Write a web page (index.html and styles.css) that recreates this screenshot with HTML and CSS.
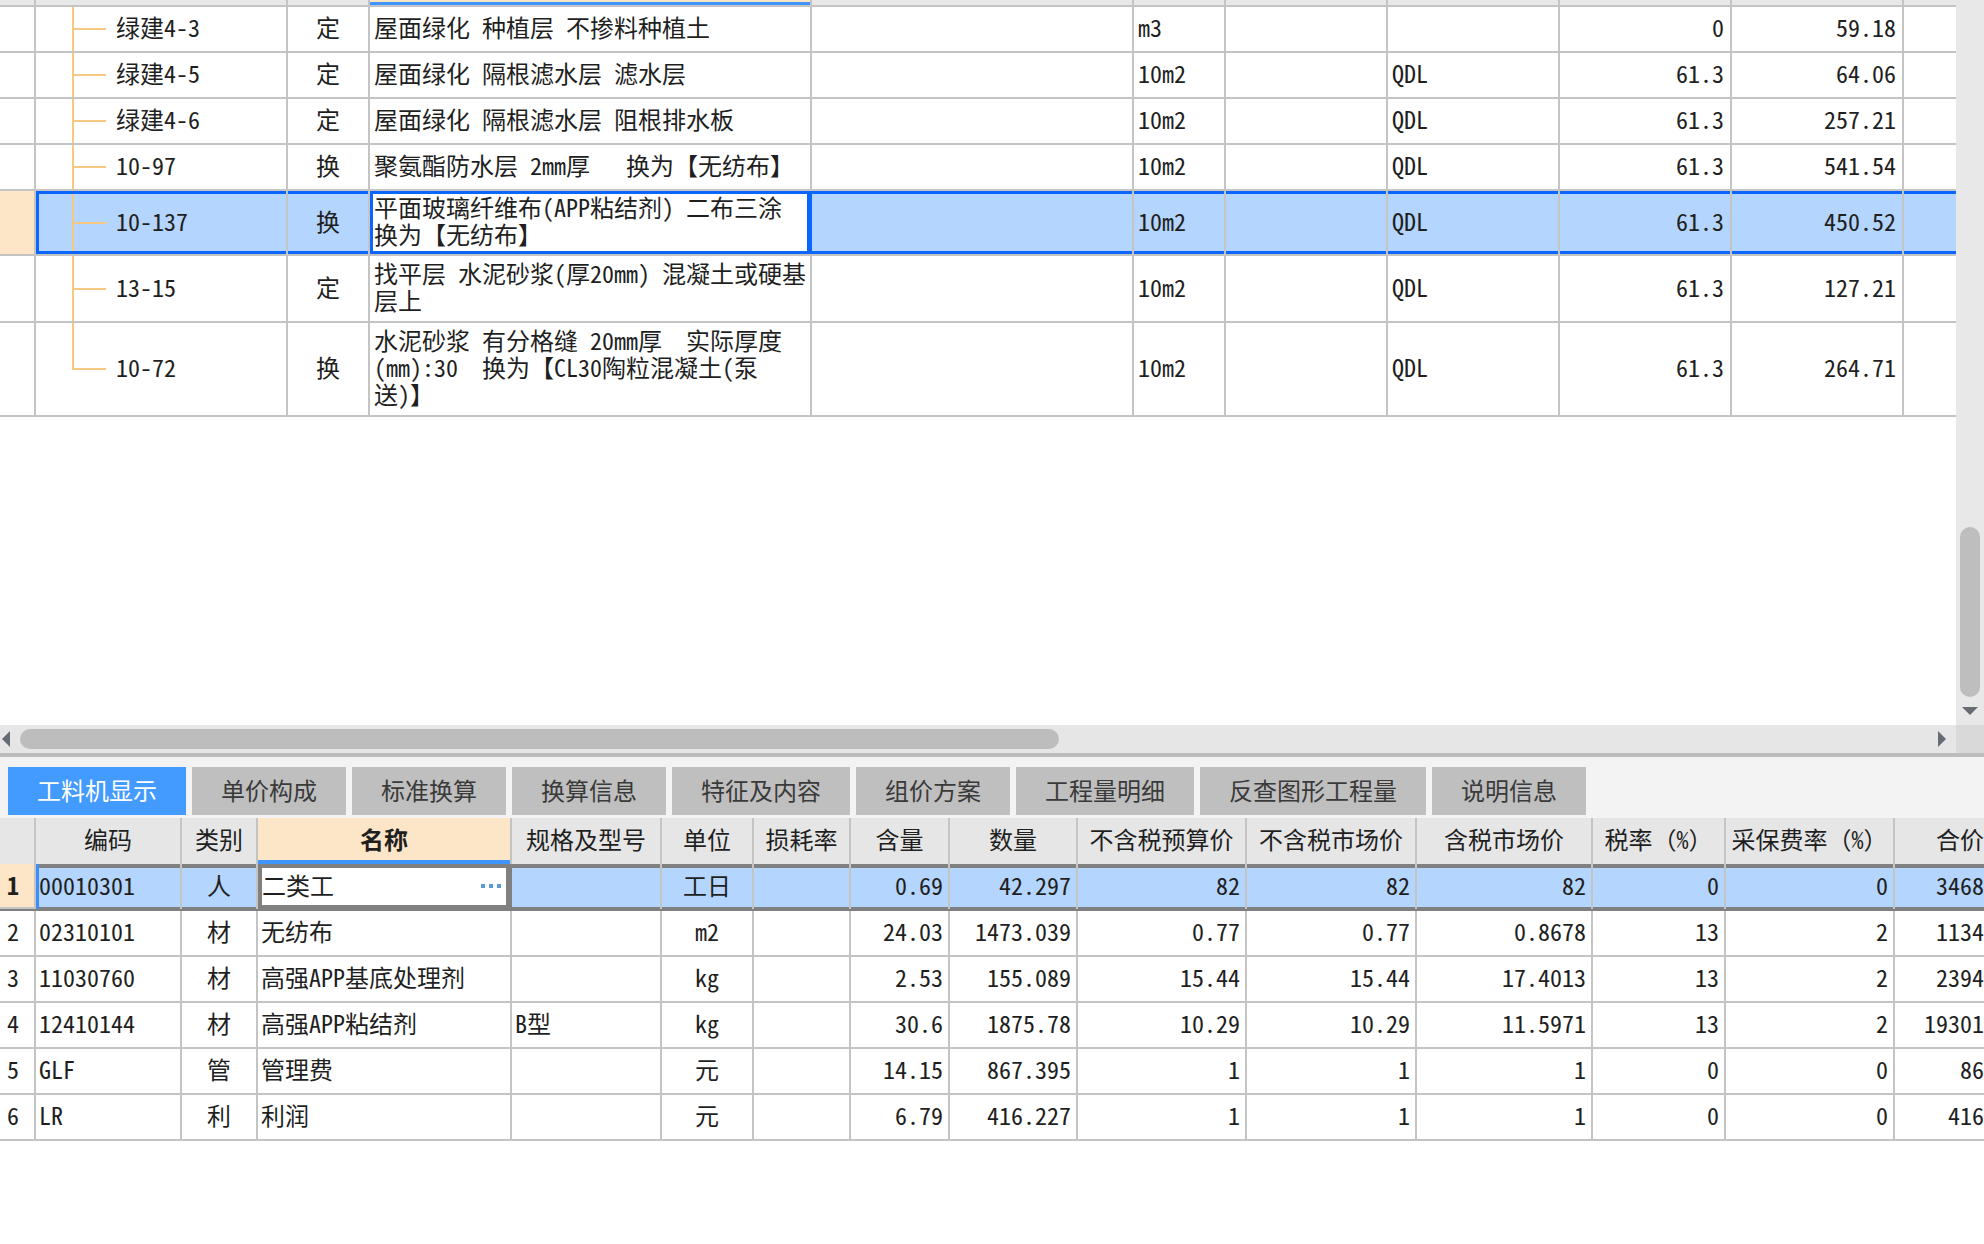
FILE: index.html
```html
<!DOCTYPE html>
<html lang="zh-CN">
<head>
<meta charset="utf-8">
<title>工料机显示</title>
<link rel="stylesheet" href="styles.css">
</head>
<body>
<div class="upper">
  <div class="sheet">
    <div class="grid-top">
      <div class="row head">
        <div class="cell"></div><div class="cell"></div><div class="cell"></div><div class="cell hsel"></div><div class="cell"></div><div class="cell"></div><div class="cell"></div><div class="cell"></div><div class="cell"></div><div class="cell"></div><div class="cell"></div>
      </div>
      <div class="row r1">
        <div class="cell rh"></div>
        <div class="cell code tree"><span class="txt">绿建4-3</span></div>
        <div class="cell ctr">定</div>
        <div class="cell"><span class="txt">屋面绿化 种植层 不掺料种植土</span></div>
        <div class="cell"></div>
        <div class="cell"><span class="txt">m3</span></div>
        <div class="cell"></div>
        <div class="cell"></div>
        <div class="cell num">0</div>
        <div class="cell num">59.18</div>
        <div class="cell"></div>
      </div>
      <div class="row r1">
        <div class="cell rh"></div>
        <div class="cell code tree"><span class="txt">绿建4-5</span></div>
        <div class="cell ctr">定</div>
        <div class="cell"><span class="txt">屋面绿化 隔根滤水层 滤水层</span></div>
        <div class="cell"></div>
        <div class="cell"><span class="txt">10m2</span></div>
        <div class="cell"></div>
        <div class="cell"><span class="txt">QDL</span></div>
        <div class="cell num">61.3</div>
        <div class="cell num">64.06</div>
        <div class="cell"></div>
      </div>
      <div class="row r1">
        <div class="cell rh"></div>
        <div class="cell code tree"><span class="txt">绿建4-6</span></div>
        <div class="cell ctr">定</div>
        <div class="cell"><span class="txt">屋面绿化 隔根滤水层 阻根排水板</span></div>
        <div class="cell"></div>
        <div class="cell"><span class="txt">10m2</span></div>
        <div class="cell"></div>
        <div class="cell"><span class="txt">QDL</span></div>
        <div class="cell num">61.3</div>
        <div class="cell num">257.21</div>
        <div class="cell"></div>
      </div>
      <div class="row r1">
        <div class="cell rh"></div>
        <div class="cell code tree"><span class="txt">10-97</span></div>
        <div class="cell ctr">换</div>
        <div class="cell"><span class="txt">聚氨酯防水层 2mm厚   换为【无纺布】</span></div>
        <div class="cell"></div>
        <div class="cell"><span class="txt">10m2</span></div>
        <div class="cell"></div>
        <div class="cell"><span class="txt">QDL</span></div>
        <div class="cell num">61.3</div>
        <div class="cell num">541.54</div>
        <div class="cell"></div>
      </div>
      <div class="row r2a sel">
        <div class="cell rh"></div>
        <div class="cell code tree first"><span class="txt">10-137</span></div>
        <div class="cell ctr">换</div>
        <div class="cell edit"><span class="txt">平面玻璃纤维布(APP粘结剂) 二布三涂<br>换为【无纺布】</span></div>
        <div class="cell"></div>
        <div class="cell"><span class="txt">10m2</span></div>
        <div class="cell"></div>
        <div class="cell"><span class="txt">QDL</span></div>
        <div class="cell num">61.3</div>
        <div class="cell num">450.52</div>
        <div class="cell"></div>
      </div>
      <div class="row r2b">
        <div class="cell rh"></div>
        <div class="cell code tree"><span class="txt">13-15</span></div>
        <div class="cell ctr">定</div>
        <div class="cell"><span class="txt">找平层 水泥砂浆(厚20mm) 混凝土或硬基<br>层上</span></div>
        <div class="cell"></div>
        <div class="cell"><span class="txt">10m2</span></div>
        <div class="cell"></div>
        <div class="cell"><span class="txt">QDL</span></div>
        <div class="cell num">61.3</div>
        <div class="cell num">127.21</div>
        <div class="cell"></div>
      </div>
      <div class="row r3">
        <div class="cell rh"></div>
        <div class="cell code tree last"><span class="txt">10-72</span></div>
        <div class="cell ctr">换</div>
        <div class="cell"><span class="txt">水泥砂浆 有分格缝 20mm厚  实际厚度<br>(mm):30  换为【CL30陶粒混凝土(泵<br>送)】</span></div>
        <div class="cell"></div>
        <div class="cell"><span class="txt">10m2</span></div>
        <div class="cell"></div>
        <div class="cell"><span class="txt">QDL</span></div>
        <div class="cell num">61.3</div>
        <div class="cell num">264.71</div>
        <div class="cell"></div>
      </div>
    </div>
  </div>
  <div class="vscroll">
    <div class="vthumb"></div>
    <div class="arrow-down"></div>
  </div>
</div>

<div class="hbar">
  <div class="htrack">
    <div class="arrow-left"></div>
    <div class="hthumb"></div>
    <div class="hspace"></div>
    <div class="arrow-right"></div>
  </div>
  <div class="corner"></div>
</div>
<div class="split"></div>

<div class="tabbar">
  <div class="tab on">工料机显示</div>
  <div class="tab">单价构成</div>
  <div class="tab">标准换算</div>
  <div class="tab">换算信息</div>
  <div class="tab">特征及内容</div>
  <div class="tab">组价方案</div>
  <div class="tab">工程量明细</div>
  <div class="tab">反查图形工程量</div>
  <div class="tab">说明信息</div>
</div>

<div class="lower">
  <div class="grid-bot">
    <div class="row bhead">
      <div class="cell"></div>
      <div class="cell ctr">编码</div>
      <div class="cell ctr">类别</div>
      <div class="cell ctr hsel2">名称</div>
      <div class="cell ctr">规格及型号</div>
      <div class="cell ctr">单位</div>
      <div class="cell ctr">损耗率</div>
      <div class="cell ctr">含量</div>
      <div class="cell ctr">数量</div>
      <div class="cell ctr">不含税预算价</div>
      <div class="cell ctr">不含税市场价</div>
      <div class="cell ctr">含税市场价</div>
      <div class="cell ctr">税率（%）</div>
      <div class="cell ctr">采保费率（%）</div>
      <div class="cell ctr">合价</div>
    </div>
    <div class="row bsel">
      <div class="cell rn">1</div>
      <div class="cell first"><span class="txt">00010301</span></div>
      <div class="cell ctr">人</div>
      <div class="cell edit"><span class="txt">二类工</span><span class="dots"><i></i><i></i><i></i></span></div>
      <div class="cell"></div>
      <div class="cell ctr">工日</div>
      <div class="cell"></div>
      <div class="cell num">0.69</div>
      <div class="cell num">42.297</div>
      <div class="cell num">82</div>
      <div class="cell num">82</div>
      <div class="cell num">82</div>
      <div class="cell num">0</div>
      <div class="cell num">0</div>
      <div class="cell num">3468.35</div>
    </div>
    <div class="row b1">
      <div class="cell rn">2</div>
      <div class="cell"><span class="txt">02310101</span></div>
      <div class="cell ctr">材</div>
      <div class="cell"><span class="txt">无纺布</span></div>
      <div class="cell"></div>
      <div class="cell ctr">m2</div>
      <div class="cell"></div>
      <div class="cell num">24.03</div>
      <div class="cell num">1473.039</div>
      <div class="cell num">0.77</div>
      <div class="cell num">0.77</div>
      <div class="cell num">0.8678</div>
      <div class="cell num">13</div>
      <div class="cell num">2</div>
      <div class="cell num">1134.24</div>
    </div>
    <div class="row b1">
      <div class="cell rn">3</div>
      <div class="cell"><span class="txt">11030760</span></div>
      <div class="cell ctr">材</div>
      <div class="cell"><span class="txt">高强APP基底处理剂</span></div>
      <div class="cell"></div>
      <div class="cell ctr">kg</div>
      <div class="cell"></div>
      <div class="cell num">2.53</div>
      <div class="cell num">155.089</div>
      <div class="cell num">15.44</div>
      <div class="cell num">15.44</div>
      <div class="cell num">17.4013</div>
      <div class="cell num">13</div>
      <div class="cell num">2</div>
      <div class="cell num">2394.57</div>
    </div>
    <div class="row b1">
      <div class="cell rn">4</div>
      <div class="cell"><span class="txt">12410144</span></div>
      <div class="cell ctr">材</div>
      <div class="cell"><span class="txt">高强APP粘结剂</span></div>
      <div class="cell"><span class="txt">B型</span></div>
      <div class="cell ctr">kg</div>
      <div class="cell"></div>
      <div class="cell num">30.6</div>
      <div class="cell num">1875.78</div>
      <div class="cell num">10.29</div>
      <div class="cell num">10.29</div>
      <div class="cell num">11.5971</div>
      <div class="cell num">13</div>
      <div class="cell num">2</div>
      <div class="cell num">19301.78</div>
    </div>
    <div class="row b1">
      <div class="cell rn">5</div>
      <div class="cell"><span class="txt">GLF</span></div>
      <div class="cell ctr">管</div>
      <div class="cell"><span class="txt">管理费</span></div>
      <div class="cell"></div>
      <div class="cell ctr">元</div>
      <div class="cell"></div>
      <div class="cell num">14.15</div>
      <div class="cell num">867.395</div>
      <div class="cell num">1</div>
      <div class="cell num">1</div>
      <div class="cell num">1</div>
      <div class="cell num">0</div>
      <div class="cell num">0</div>
      <div class="cell num">867.4</div>
    </div>
    <div class="row b1">
      <div class="cell rn">6</div>
      <div class="cell"><span class="txt">LR</span></div>
      <div class="cell ctr">利</div>
      <div class="cell"><span class="txt">利润</span></div>
      <div class="cell"></div>
      <div class="cell ctr">元</div>
      <div class="cell"></div>
      <div class="cell num">6.79</div>
      <div class="cell num">416.227</div>
      <div class="cell num">1</div>
      <div class="cell num">1</div>
      <div class="cell num">1</div>
      <div class="cell num">0</div>
      <div class="cell num">0</div>
      <div class="cell num">416.23</div>
    </div>
  </div>
</div>
</body>
</html>
```

FILE: styles.css
```css
* { box-sizing: border-box; }

html, body {
  margin: 0;
  padding: 0;
  overflow: hidden;
}

body {
  width: 1984px;
  height: 1244px;
  background: #ffffff;
  font-family: "Noto Sans Mono CJK SC", "Noto Sans CJK SC", sans-serif;
  font-size: 24px;
  color: #1f1f1f;
}

/* ---------- upper sheet ---------- */
.upper {
  display: flex;
  height: 725px;
}

.sheet {
  width: 1956px;
  overflow: hidden;
}

.grid-top .row {
  display: grid;
  grid-template-columns: 36px 252px 82px 442px 322px 92px 162px 172px 172px 172px 172px;
  width: max-content;
  border-bottom: 2px solid #c4c4c4;
}

.cell {
  border-right: 2px solid #c4c4c4;
  display: flex;
  align-items: center;
  padding: 0 4px 5px;
  line-height: 27px;
  white-space: nowrap;
}

.txt { white-space: pre; }

.num {
  justify-content: flex-end;
  padding-right: 6px;
}

.ctr { justify-content: center; }

.grid-top .row.head { height: 7px; background: #e8e8e8; }
.grid-top .row.head .cell { padding: 0; }
.hsel {
  background: #fde5c7;
  box-shadow: inset 0 -3px 0 #3f95ff;
}

.grid-top .r1 { height: 46px; }
.grid-top .r2a { height: 65px; }
.grid-top .r2b { height: 67px; }
.grid-top .r3 { height: 94px; }

.code { padding-left: 80px; }

.tree {
  background-image:
    linear-gradient(#f7c882, #f7c882),
    linear-gradient(#f7c882, #f7c882);
  background-repeat: no-repeat;
  background-position: 36px 0, 36px 50%;
  background-size: 2px 100%, 34px 2px;
}
.tree.last {
  background-size: 2px 50%, 34px 2px;
}

/* selected row in upper sheet */
.sel .cell {
  background-color: #b4d5fe;
  box-shadow: inset 0 3px 0 #0a66ff, inset 0 -3px 0 #0a66ff;
}
.sel .cell.rh {
  background-color: #fde5c7;
  box-shadow: none;
}
.sel .cell.first {
  box-shadow: inset 3px 0 0 #0a66ff, inset 0 3px 0 #0a66ff, inset 0 -3px 0 #0a66ff;
}
.sel .cell.edit {
  background-color: #ffffff;
  box-shadow: inset 0 0 0 3px #0a66ff;
  border-right-color: #0a66ff;
  padding-left: 4px;
}

/* vertical scrollbar */
.vscroll {
  width: 28px;
  background: #e8e8e8;
  display: flex;
  flex-direction: column;
  align-items: center;
  padding-top: 527px;
}
.vthumb {
  width: 20px;
  height: 170px;
  border-radius: 10px;
  background: #bebebe;
}
.arrow-down {
  margin-top: 10px;
  width: 0;
  height: 0;
  border-left: 8px solid transparent;
  border-right: 8px solid transparent;
  border-top: 8px solid #676b74;
}

/* horizontal scrollbar */
.hbar {
  display: flex;
  height: 28px;
}
.htrack {
  width: 1956px;
  background: #e6e6e6;
  display: flex;
  align-items: center;
  padding: 0 10px 0 2px;
}
.arrow-left {
  width: 0;
  height: 0;
  border-top: 8px solid transparent;
  border-bottom: 8px solid transparent;
  border-right: 8px solid #676b74;
}
.hthumb {
  margin-left: 10px;
  width: 1039px;
  height: 20px;
  border-radius: 10px;
  background: #bdbdbd;
}
.hspace { flex: 1; }
.arrow-right {
  width: 0;
  height: 0;
  border-top: 8px solid transparent;
  border-bottom: 8px solid transparent;
  border-left: 8px solid #676b74;
}
.corner {
  width: 28px;
  background: #d9d9d9;
}
.split {
  height: 4px;
  background: #bdbdbd;
}

/* tabs */
.tabbar {
  height: 61px;
  background: #f3f3f3;
  display: flex;
  gap: 6px;
  padding: 10px 0 3px 8px;
}
.tab {
  padding: 0 29px 3px;
  background: #bfbfbf;
  color: #3a3a3a;
  display: flex;
  align-items: center;
  white-space: nowrap;
}
.tab.on {
  background: #449bff;
  color: #ffffff;
}

/* lower grid */
.lower {
  width: 1984px;
  overflow: hidden;
}
.grid-bot .row {
  display: grid;
  grid-template-columns: 36px 146px 76px 254px 150px 92px 97px 99px 128px 169px 170px 176px 133px 169px 132px;
  width: max-content;
}
.grid-bot .cell { padding: 0 3px 5px; }
.grid-bot .cell.num { padding-right: 5px; }

.bhead {
  height: 46px;
  background: #e6e6e6;
}
.hsel2 {
  background: #fde5c7;
  font-weight: bold;
  box-shadow: inset 0 -4px 0 #3f95ff;
}

.b1 {
  height: 46px;
  border-bottom: 2px solid #c4c4c4;
}

.grid-bot .cell.rn { padding-left: 7px; }

.bsel {
  height: 47px;
  border-bottom: 2px solid #808080;
}
.bsel .cell {
  background-color: #b4d5fe;
  box-shadow: inset 0 4px 0 #808080, inset 0 -2px 0 #808080;
}
.bsel .cell.rn {
  background-color: #fde5c7;
  font-weight: bold;
  box-shadow: inset 0 -2px 0 #c4c4c4;
}
.bsel .cell.first {
  box-shadow: inset 3px 0 0 #3d8ef5, inset 0 4px 0 #808080, inset 0 -2px 0 #808080;
}
.bsel .cell.edit {
  background-color: #ffffff;
  box-shadow: inset 0 0 0 4px #808080;
  border-right-color: #808080;
  justify-content: space-between;
  padding-left: 4px;
}

.dots {
  display: flex;
  gap: 4px;
  margin-right: 6px;
  margin-top: 4px;
}
.dots i {
  display: block;
  width: 4px;
  height: 4px;
  background: #5b9bd5;
}
```
